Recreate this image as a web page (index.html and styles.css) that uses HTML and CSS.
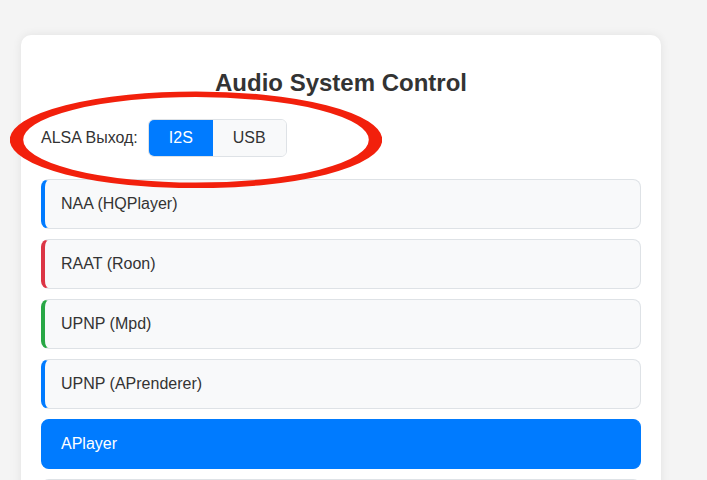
FILE: index.html
```html
<!DOCTYPE html>
<html lang="ru">
<head>
<meta charset="utf-8">
<title>Audio System Control</title>
<link rel="stylesheet" href="styles.css">
</head>
<body>
<div class="card">
  <h2 class="title">Audio System Control</h2>
  <div class="alsa-row">
    <span class="alsa-label">ALSA Выход:</span>
    <div class="toggle">
      <button class="toggle-btn active">I2S</button>
      <button class="toggle-btn">USB</button>
    </div>
  </div>
  <div class="services">
    <div class="service blue">NAA (HQPlayer)</div>
    <div class="service red">RAAT (Roon)</div>
    <div class="service green">UPNP (Mpd)</div>
    <div class="service blue">UPNP (APrenderer)</div>
    <div class="service active">APlayer</div>
    <div class="service blue">&nbsp;</div>
  </div>
  <svg class="mark" viewBox="0 0 155 97" preserveAspectRatio="none" aria-hidden="true">
    <ellipse cx="77.5" cy="48.8" rx="74.8" ry="45.6" fill="none" stroke="#f2200c" stroke-width="5.6"/>
  </svg>
</div>
</body>
</html>
```

FILE: styles.css
```css
html, body {
  margin: 0;
  padding: 0;
  background: #f4f4f4;
  font-family: "Liberation Sans", Arial, sans-serif;
  color: #333;
}

body {
  padding: 35px 0 0 21px;
}

.card {
  position: relative;
  width: 640px;
  box-sizing: border-box;
  padding: 20px;
  background: #fff;
  border-radius: 10px;
  box-shadow: 0 0 10px rgba(0, 0, 0, 0.08);
}

.title {
  margin: 14px 0 22px;
  font-size: 24px;
  font-weight: bold;
  text-align: center;
  color: #333;
}

.alsa-row {
  display: flex;
  align-items: center;
  gap: 10px;
  margin-bottom: 22px;
}

.alsa-label {
  font-size: 16px;
  color: #333;
}

.toggle {
  display: flex;
  border-radius: 6px;
  overflow: hidden;
  border: 1px solid #dee2e6;
}

.toggle-btn {
  font-family: "Liberation Sans", Arial, sans-serif;
  font-size: 16px;
  line-height: 18px;
  padding: 9px 20px;
  border: 0;
  margin: 0;
  background: #f8f9fa;
  color: #333;
}

.toggle-btn.active {
  background: #007bff;
  color: #fff;
}

.services {
  display: flex;
  flex-direction: column;
  gap: 10px;
}

.service {
  font-size: 16px;
  line-height: 18px;
  padding: 15px 16px;
  background: #f8f9fa;
  border: 1px solid #dee2e6;
  border-left: 4px solid #007bff;
  border-radius: 8px;
  color: #333;
}

.service.blue { border-left-color: #007bff; }
.service.red { border-left-color: #dc3545; }
.service.green { border-left-color: #28a745; }

.service.active {
  background: #007bff;
  border-color: #007bff;
  color: #fff;
}

.mark {
  position: absolute;
  left: -11px;
  top: 56px;
  width: 372px;
  height: 97px;
  pointer-events: none;
}
```
